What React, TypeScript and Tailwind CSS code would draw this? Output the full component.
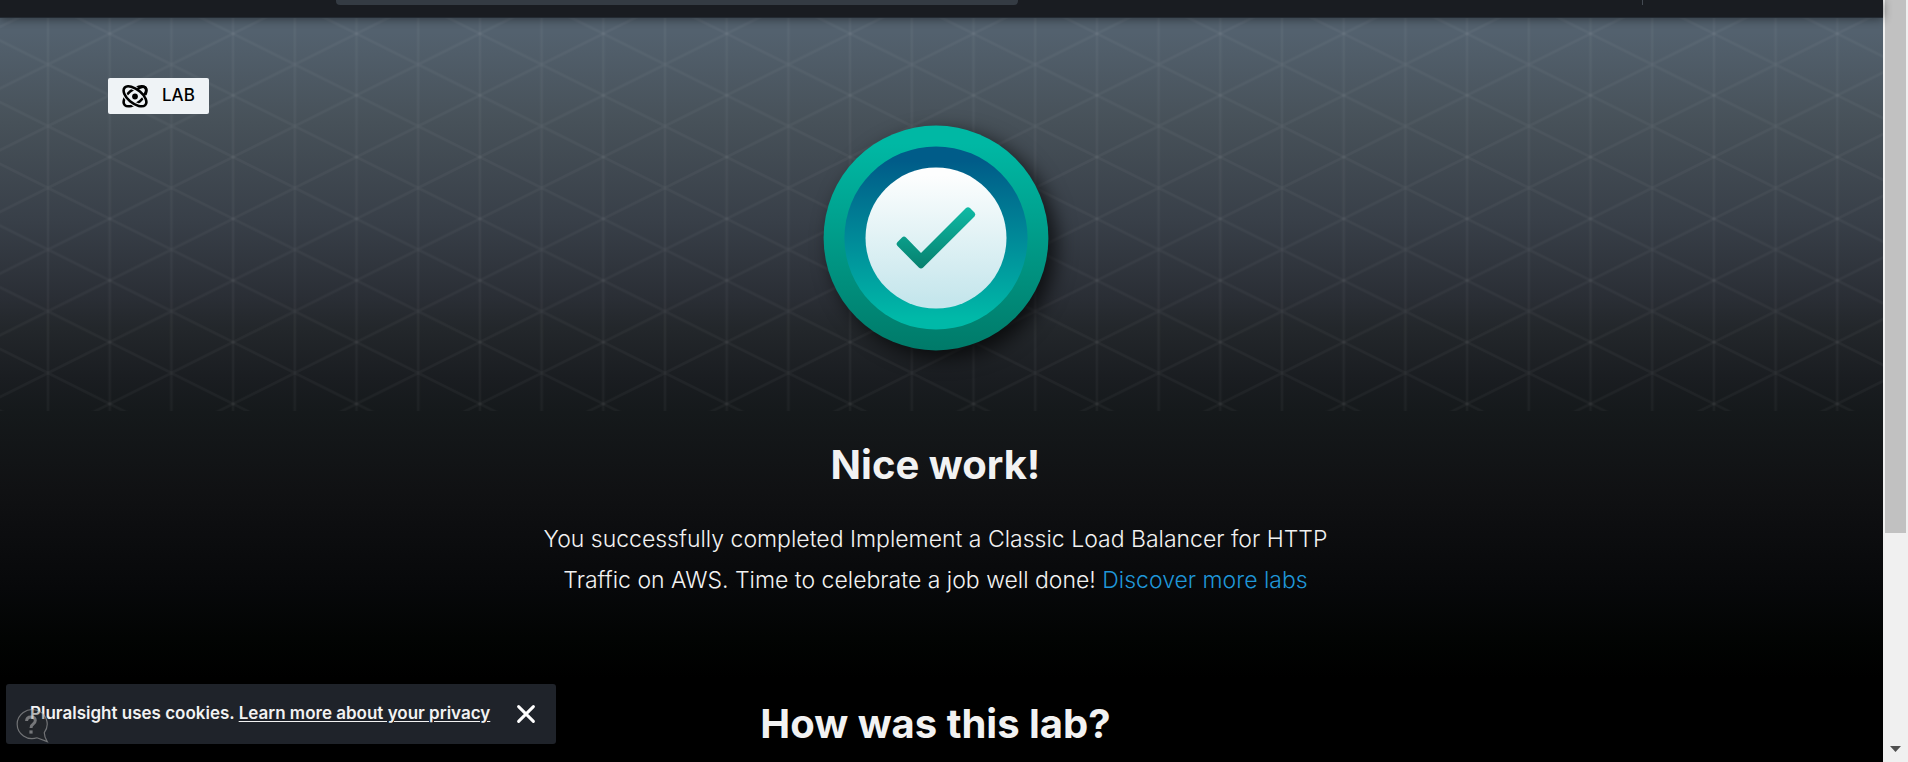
import React from "react";

function TrianglePattern() {
  return (
    <svg className="absolute inset-x-0 top-0 h-[393px] w-full" aria-hidden="true">
      <defs>
        <pattern id="tri" x="48" y="46.5" width="123.4" height="61.7" patternUnits="userSpaceOnUse">
          <g stroke="#ffffff" strokeOpacity="0.035" strokeWidth="2.6" fill="none">
            <path d="M0 0L123.4 61.7" />
            <path d="M123.4 0L0 61.7" />
            <path d="M0 0V61.7M61.7 0V61.7M123.4 0V61.7" />
          </g>
        </pattern>
      </defs>
      <rect width="100%" height="100%" fill="url(#tri)" />
    </svg>
  );
}

function LabIcon() {
  return (
    <svg className="h-[23px] w-[26px]" viewBox="0.4 0 25.2 22" fill="none" aria-hidden="true">
      <path
        d="M22.9 2.3C25.6 5 23.2 11.2 17.8 15.6C12.4 20.1 5.8 21.9 3.1 19.3C0.4 16.7 2.8 10.6 8.2 6.2C13.6 1.8 20.2 -0.4 22.9 2.3Z"
        stroke="#000"
        strokeWidth="2.5"
      />
      <path
        d="M3.1 2.3C0.4 5 2.8 11.2 8.2 15.6C13.6 20.1 20.2 21.9 22.9 19.3C25.6 16.7 23.2 10.6 17.8 6.2C12.4 1.8 5.8 -0.4 3.1 2.3Z"
        stroke="#eff3f6"
        strokeWidth="4.6"
      />
      <path
        d="M3.1 2.3C0.4 5 2.8 11.2 8.2 15.6C13.6 20.1 20.2 21.9 22.9 19.3C25.6 16.7 23.2 10.6 17.8 6.2C12.4 1.8 5.8 -0.4 3.1 2.3Z"
        stroke="#000"
        strokeWidth="2.5"
      />
      <path d="M14.5 4.2C18 1.9 21.4 1 22.9 2.3C24.4 3.8 24 6.5 22 9.6" stroke="#000" strokeWidth="2.5" />
      <circle cx="13" cy="11" r="2.8" fill="#000" />
    </svg>
  );
}

function CompletionBadge() {
  return (
    <svg
      className="size-[226px] overflow-visible drop-shadow-[8px_7px_10px_rgba(0,0,0,0.7)]"
      viewBox="-113 -113 226 226"
      role="img"
      aria-label="Completed"
    >
      <defs>
        <linearGradient id="outer" x1="0" y1="0" x2="0" y2="1">
          <stop offset="0.08" stopColor="#00b8a4" />
          <stop offset="1" stopColor="#007a69" />
        </linearGradient>
        <linearGradient id="middle" x1="0" y1="0" x2="0" y2="1">
          <stop offset="0.08" stopColor="#005c89" />
          <stop offset="0.94" stopColor="#00b9a8" />
        </linearGradient>
        <linearGradient id="inner" x1="0" y1="0" x2="0" y2="1">
          <stop offset="0.05" stopColor="#fdfefe" />
          <stop offset="0.95" stopColor="#c5e6ec" />
        </linearGradient>
        <linearGradient id="check" x1="0" y1="0" x2="0" y2="1">
          <stop offset="0" stopColor="#0fbaa5" />
          <stop offset="1" stopColor="#07806e" />
        </linearGradient>
      </defs>
      <circle r="112.4" fill="url(#outer)" />
      <circle r="91.6" fill="url(#middle)" />
      <circle r="70.5" fill="url(#inner)" />
      <path
        d="M-38.7 7.8Q-40.4 6 -38.7 4.2L-34 -0.6Q-32 -2.2 -30 -0.6L-15 15L30 -30Q32 -31.6 34 -30L38.5 -25.5Q40.2 -23.5 38.5 -21.6L-12.8 29.6Q-15 31.6 -17.2 29.6Z"
        fill="url(#check)"
      />
    </svg>
  );
}

function HelpBubble() {
  return (
    <button type="button" aria-label="Help" className="absolute bottom-0 left-[7px] h-9 w-9 opacity-60">
      <svg viewBox="0 0 36 36" className="size-9" fill="none" aria-hidden="true">
        <path
          d="M34.2 33.6L24 29.8A15 14.5 0 1 1 31.3 24.6Q31.2 28.6 34.2 33.6Z"
          fill="#2b2b2b"
          fillOpacity="0.5"
          stroke="#a8a8a8"
          strokeWidth="1.2"
        />
        <path d="M13.6 13Q13.6 8.9 18 8.9Q22.3 8.9 22.3 12.6Q22.3 14.8 20 16.2Q18 17.4 18 20" stroke="#b0b0b0" strokeWidth="3" />
        <path d="M16.4 22.4H19.6V25.6H16.4Z" fill="#b0b0b0" />
      </svg>
    </button>
  );
}

export default function App() {
  return (
    <div className="flex min-h-screen bg-black font-[Inter,'Liberation_Sans',sans-serif] text-[#f2f2f2]">
      <div className="flex min-w-0 flex-1 flex-col">
        <header className="relative z-10 flex h-[18px] items-start border-b border-[#232a32] bg-[#191c21] shadow-[0_1px_10px_rgba(0,0,0,0.45)]">
          <div className="ml-[336px] h-[5px] w-[682px] rounded-b-[4px] bg-[#343b43]" />
          <div className="mr-[240px] ml-auto h-[5px] w-px bg-[#444a52]" />
        </header>
        <main className="relative flex-1 bg-[linear-gradient(180deg,#53616e_0px,#53616e_15px,#475159_104px,#383f48_204px,#2a2e35_280px,#23272b_310px,#1a1d21_360px,#15191b_394px,#101113_474px,#07080a_570px,#020403_620px,#000000_660px)]">
          <TrianglePattern />
          <div className="relative px-[108px] pt-[60px]">
            <div className="flex h-9 w-[101px] items-center gap-[14px] rounded-[2px] bg-[#eff3f6] pl-[14px] text-[17px] font-medium text-black">
              <LabIcon />
              <span>LAB</span>
            </div>
          </div>
          <section className="relative flex flex-col items-center pt-[11px] pr-3 text-center">
            <CompletionBadge />
            <h1 className="mt-[88px] text-[40px] leading-[52px] font-bold">Nice work!</h1>
            <p className="mt-7 w-[800px] max-w-full text-[23px] leading-[41px] font-light">
              You successfully completed Implement a Classic Load Balancer for HTTP Traffic on AWS. Time to celebrate a
              job well done!{" "}
              <a href="#labs" className="text-[#1f96d8]">
                Discover more labs
              </a>
            </p>
            <h2 className="mt-[97px] text-[40px] leading-[52px] font-bold">How was this lab?</h2>
          </section>
        </main>
      </div>
      <div className="flex w-[25px] shrink-0 flex-col items-center bg-[#f0f0f0]" aria-hidden="true">
        <div className="h-[533px] w-[21px] bg-[#c1c1c1]" />
        <svg className="mt-auto mb-[10px] h-[6px] w-[11px]" viewBox="0 0 11 6">
          <path d="M0 0H11L5.5 6Z" fill="#505050" />
        </svg>
      </div>
      <div className="fixed bottom-[18px] left-[6px] z-20 flex h-[60px] w-[550px] items-center justify-between rounded-[3px] bg-[#1f232a] pr-5 pl-6">
        <p className="text-[17px] font-semibold whitespace-nowrap">
          Pluralsight uses cookies.{" "}
          <a href="#privacy" className="underline underline-offset-2">
            Learn more about your privacy
          </a>
        </p>
        <button type="button" aria-label="Close" className="size-5">
          <svg viewBox="0 0 20 20" className="size-5" aria-hidden="true">
            <path d="M2.6 2.6L17.4 17.4M17.4 2.6L2.6 17.4" stroke="#fff" strokeWidth="3" strokeLinecap="round" />
          </svg>
        </button>
        <HelpBubble />
      </div>
    </div>
  );
}
